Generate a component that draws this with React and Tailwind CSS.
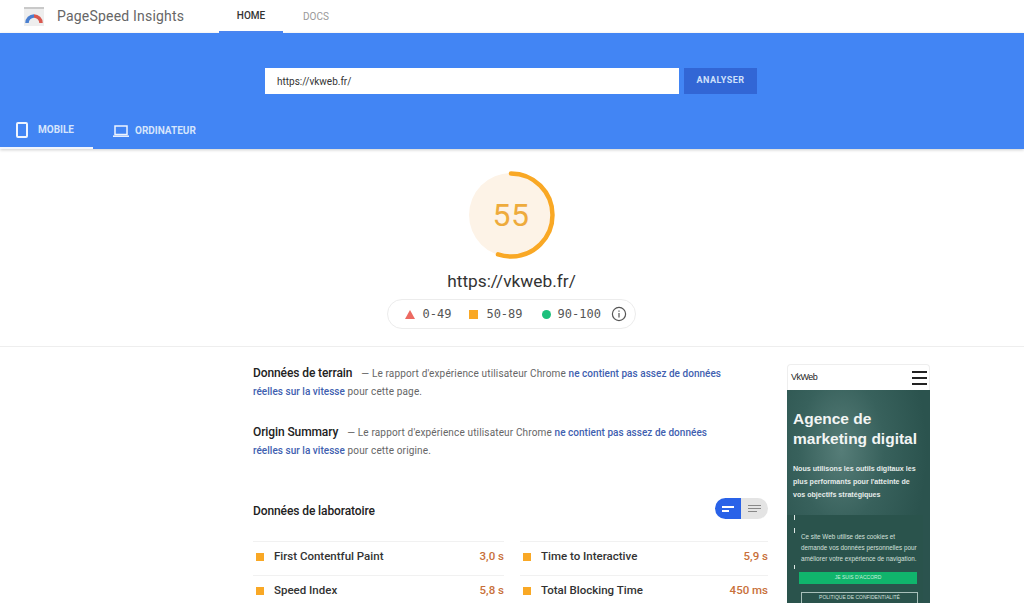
const roboto = { fontFamily: 'Roboto, sans-serif' }

const Logo = () => (
  <svg width="20" height="19" viewBox="0 0 20 19">
    <rect x="0" y="0" width="20" height="19" fill="#eeeeee" />
    <rect x="0" y="0" width="20" height="2" fill="#c9c9c9" />
    <path d="M3 16a7 7 0 0 1 7-7" fill="none" stroke="#4a7fd0" strokeWidth="3.5" />
    <path d="M10 9a7 7 0 0 1 7 7" fill="none" stroke="#d9584f" strokeWidth="3.5" />
  </svg>
)

const PhoneIcon = () => (
  <svg width="12" height="16" viewBox="0 0 12 16" fill="none" stroke="#eef4fe" strokeWidth="2">
    <rect x="1" y="1" width="10" height="14" rx="1" />
  </svg>
)

const LaptopIcon = () => (
  <svg width="16" height="12" viewBox="0 0 16 12" fill="none" stroke="#eef4fe" strokeWidth="1.5">
    <rect x="2" y="1" width="12" height="8.5" />
    <path d="M0 11.2h16" />
  </svg>
)

const Gauge = () => (
  <div className="relative w-[88px] h-[88px] -ml-[2px]">
    <svg width="88" height="88" viewBox="0 0 88 88" className="-rotate-90">
      <circle cx="44" cy="44" r="42" fill="#fdf3e7" />
      <circle
        cx="44"
        cy="44"
        r="41.5"
        fill="none"
        stroke="#f9a825"
        strokeWidth="4.5"
        strokeLinecap="round"
        strokeDasharray="143.4 260.8"
      />
    </svg>
    <div className="absolute inset-0 flex items-center justify-center text-[32px] text-[#eeab3c] tracking-[0.5px]">55</div>
  </div>
)

const Legend = () => (
  <div className="flex items-center h-[30px] w-[249px] rounded-full border border-[#ececec] pl-[17px] text-[12px] text-[#555] -ml-[2px]" style={{ fontFamily: '"DejaVu Sans Mono", monospace' }}>
    <svg width="10" height="9" viewBox="0 0 10 9"><path d="M5 0l5 9H0z" fill="#ec6a62" /></svg>
    <span className="ml-[8px]">0-49</span>
    <span className="ml-[18px] w-[9px] h-[9px] bg-[#f9a825]" />
    <span className="ml-[8px]">50-89</span>
    <span className="ml-[19px] w-[9px] h-[9px] rounded-full bg-[#1cc07c]" />
    <span className="ml-[7px]">90-100</span>
    <svg className="ml-[10px]" width="16" height="16" viewBox="0 0 16 16" fill="none" stroke="#555" strokeWidth="1.2">
      <circle cx="8" cy="8" r="6.6" />
      <path d="M8 7v4.5M8 4.4v1.3" />
    </svg>
  </div>
)

const Metric = ({ label, value }) => (
  <div className="flex items-center h-[34px] pb-[4px] border-b border-[#f1f1f1] last:border-b-0">
    <span className="w-[8px] h-[8px] ml-[3px] bg-[#f9a825]" />
    <span className="ml-[10px] text-[11.5px] font-medium text-[#333]">{label}</span>
    <span className="ml-auto text-[11.5px] font-medium text-[#c8703a]">{value}</span>
  </div>
)

const InfoBlock = ({ title, ending, gap }) => (
  <div className="text-[10px] leading-[18px] text-[#666] tracking-[0.15px]">
    <span className="text-[12px] font-medium text-[#222] tracking-[-0.1px]">{title}</span>
    <span className={gap}>— Le rapport d'expérience utilisateur Chrome </span>
    <span className="font-medium text-[#3f5fb0] tracking-[0.03px]">ne contient pas assez de données</span>
    <br />
    <span className="font-medium text-[#3f5fb0] tracking-[0.03px]">réelles sur la vitesse</span>
    <span> {ending}</span>
  </div>
)

const PhonePreview = () => (
  <div className="w-[143px] shrink-0 h-[239px] overflow-hidden" style={{ fontFamily: '"Liberation Sans", sans-serif' }}>
    <div className="h-[26px] flex items-center justify-between bg-white border border-b-0 border-[#eee] rounded-t-[4px] pl-[3px] pr-[2px]">
      <span className="text-[9px] text-[#222] tracking-[-0.5px]">VkWeb</span>
      <div className="flex flex-col gap-[4px] w-[15px]">
        <div className="h-[2px] bg-[#222]" />
        <div className="h-[2px] bg-[#222]" />
        <div className="h-[2px] bg-[#222]" />
      </div>
    </div>
    <div className="relative h-[213px] bg-[radial-gradient(ellipse_at_38%_28%,#567d78_0%,#38615c_34%,#2b534e_68%)] pl-[6px] pt-[19px]">
      <div className="text-[15.5px] leading-[20px] font-bold text-[#f2f5f4] whitespace-nowrap">
        Agence de<br />marketing digital
      </div>
      <div className="mt-[14px] text-[7.1px] leading-[13px] font-bold text-[#e6ecea] whitespace-nowrap">
        Nous utilisons les outils digitaux les<br />plus performants pour l'atteinte de<br />vos objectifs stratégiques
      </div>
      <div className="relative mt-[13px] -ml-[6px] mr-[7px] bg-[#2a534c] h-[90px] pl-[14px] pt-[16px]">
        <div className="absolute left-[7px] top-[0px] w-[1px] h-[5px] bg-[#dfe8e5]" />
        <div className="absolute left-[7px] top-[13px] w-[1px] h-[5px] bg-[#dfe8e5]" />
        <div className="absolute left-[7px] top-[50px] w-[1px] h-[4px] bg-[#dfe8e5]" />
        <div className="text-[6.3px] leading-[11px] text-[#d6e0dd] whitespace-nowrap">
          Ce site Web utilise des cookies et<br />demande vos données personnelles pour<br />améliorer votre expérience de navigation.
        </div>
        <div className="mt-[8px] -ml-[2px] mr-[6px] h-[12px] bg-[#10b46c] flex items-center justify-center text-[5px] text-[#c9efdc]">JE SUIS D'ACCORD</div>
        <div className="mt-[8px] mr-[5px] h-[12px] border border-[#a8c0ba] flex items-center justify-center text-[5px] text-[#d6e0dd]">POLITIQUE DE CONFIDENTIALITÉ</div>
      </div>
    </div>
  </div>
)

export default function App() {
  return (
    <div className="h-[603px] w-[1024px] overflow-hidden bg-white" style={roboto}>
      <header className="flex h-[33px] items-stretch pl-[24px]">
        <div className="flex items-center"><Logo /></div>
        <div className="flex items-center ml-[13px] w-[162px] text-[14px] text-[#666] tracking-[0.2px]">PageSpeed Insights</div>
        <div className="flex items-center justify-center w-[64px] border-b-2 border-[#4a85f0] text-[10px] font-medium text-[#333]">HOME</div>
        <div className="flex items-center justify-center w-[66px] text-[10px] text-[#999]">DOCS</div>
      </header>

      <section className="h-[116px] bg-[#4285f4] shadow-[0_1px_3px_rgba(0,0,0,0.2)]">
        <div className="flex justify-center gap-[5px] pt-[35px] pr-[2px]">
          <div className="w-[414px] h-[26px] bg-white flex items-center pl-[12px] text-[10px] text-[#333]">https://vkweb.fr/</div>
          <div className="w-[73px] h-[26px] bg-[#3266d5] flex items-center justify-center text-[9px] font-bold text-[#cfe0fb] tracking-[0.5px]">ANALYSER</div>
        </div>
        <div className="flex mt-[19px] h-[36px]">
          <div className="flex items-center w-[93px] border-b-2 border-[#f1f5fd] pl-[16px] pb-[1px]">
            <PhoneIcon />
            <span className="ml-[10px] text-[10px] font-bold text-[#d5e4fc]">MOBILE</span>
          </div>
          <div className="flex items-center pl-[20px] pb-[1px]">
            <LaptopIcon />
            <span className="ml-[6px] text-[10px] font-bold text-[#d5e4fc]">ORDINATEUR</span>
          </div>
        </div>
      </section>

      <section className="flex flex-col items-center h-[198px] border-b border-[#eeeeee] pt-[22px]">
        <Gauge />
        <div className="mt-[10px] -ml-[1px] text-[17.3px] leading-[24px] text-[#333]">https://vkweb.fr/</div>
        <div className="mt-[6px]"><Legend /></div>
      </section>

      <main className="flex pl-[253px] pt-[17px]">
        <div className="w-[515px]">
          <InfoBlock title="Données de terrain" gap="ml-[9px]" ending="pour cette page." />
          <div className="mt-[22px]">
            <InfoBlock title="Origin Summary" gap="ml-[9px]" ending="pour cette origine." />
          </div>
          <div className="flex items-center justify-between mt-[38px]">
            <div className="text-[12px] font-medium text-[#222] tracking-[-0.1px]">Données de laboratoire</div>
            <div className="flex h-[21px] w-[53px] mb-[5px] rounded-full overflow-hidden">
              <div className="flex-1 flex flex-col items-center justify-center gap-[2px] bg-[#2962e8]">
                <div className="w-[12px] h-[2px] bg-white" />
                <div className="w-[7px] h-[2px] bg-white -ml-[5px]" />
              </div>
              <div className="w-[27px] flex flex-col items-center justify-center gap-[2px] bg-[#e4e4e4]">
                <div className="w-[13px] h-[1px] bg-[#888]" />
                <div className="w-[13px] h-[1px] bg-[#888]" />
                <div className="w-[9px] h-[1px] bg-[#888] -ml-[4px]" />
              </div>
            </div>
          </div>
          <div className="grid grid-cols-[251px_1fr] gap-x-[16px] mt-[17px]">
            <div className="border-t border-[#f1f1f1]">
              <Metric label="First Contentful Paint" value="3,0 s" />
              <Metric label="Speed Index" value="5,8 s" />
            </div>
            <div className="border-t border-[#f1f1f1]">
              <Metric label="Time to Interactive" value="5,9 s" />
              <Metric label="Total Blocking Time" value="450 ms" />
            </div>
          </div>
        </div>
        <div className="ml-[19px]"><PhonePreview /></div>
      </main>
    </div>
  )
}
